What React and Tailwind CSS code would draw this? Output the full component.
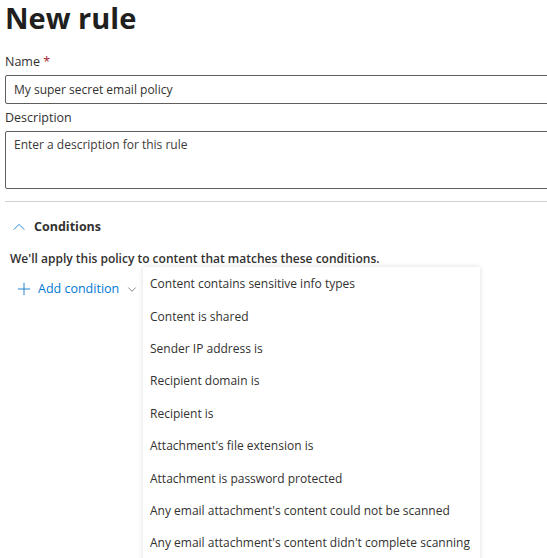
import React from 'react';

const conditionOptions = [
  'Content contains sensitive info types',
  'Content is shared',
  'Sender IP address is',
  'Recipient domain is',
  'Recipient is',
  "Attachment's file extension is",
  'Attachment is password protected',
  "Any email attachment's content could not be scanned",
  "Any email attachment's content didn't complete scanning",
];

function ChevronUp({ className }) {
  return (
    <svg viewBox="0 0 16 16" className={className} fill="none" stroke="currentColor" strokeWidth="1">
      <path d="M2 11 L8 5 L14 11" />
    </svg>
  );
}

function ChevronDown({ className }) {
  return (
    <svg viewBox="0 0 16 16" className={className} fill="none" stroke="currentColor" strokeWidth="1">
      <path d="M3 6 L8 11 L13 6" />
    </svg>
  );
}

function Plus({ className }) {
  return (
    <svg viewBox="0 0 16 16" className={className} fill="none" stroke="currentColor" strokeWidth="1">
      <path d="M8 1 V15 M1 8 H15" />
    </svg>
  );
}

export default function App() {
  return (
    <div
      className="relative w-[547px] h-[558px] overflow-hidden bg-white text-[#323130]"
      style={{ fontFamily: '"Open Sans", "Noto Sans", sans-serif' }}
    >
      <div className="pl-[5px] pt-[3px]">
        <h1 className="text-[29px] font-bold leading-[30px] text-[#201f1e]">New rule</h1>

        <label className="block mt-[19px] text-[12.5px] leading-[20px]">
          Name <span className="text-[#a4262c]">*</span>
        </label>
        <div className="mt-[3px] w-[560px] h-[29px] border border-[#605e5c] rounded-[2px] flex items-center px-[8px] pt-[1px] text-[12px]">
          My super secret email policy
        </div>

        <label className="block mt-[4px] text-[12.5px] leading-[20px]">Description</label>
        <div className="mt-[3px] w-[560px] h-[58px] border border-[#605e5c] rounded-[2px] px-[8px] pt-[4px] text-[12px] text-[#3b3a39]">
          Enter a description for this rule
        </div>

        <div className="mt-[12px] w-[560px] h-px bg-[#d2d0ce]" />

        <div className="mt-[15px] flex items-center pl-[7px] h-[20px]">
          <ChevronUp className="w-[14px] h-[14px] text-[#0078d4]" />
          <span className="ml-[8px] text-[12.5px] font-bold">Conditions</span>
        </div>

        <p className="mt-[12px] pl-[5px] text-[12px] font-semibold leading-[20px]">
          We'll apply this policy to content that matches these conditions.
        </p>

        <div className="mt-[10px] flex items-center pl-[12px] h-[20px] text-[#0078d4]">
          <Plus className="w-[14px] h-[14px]" />
          <span className="ml-[7px] text-[12.5px]">Add condition</span>
          <ChevronDown className="ml-[7px] w-[12px] h-[12px] text-[#605e5c]" />
        </div>
      </div>

      <div className="absolute left-[143px] top-[267px] w-[337px] bg-white shadow-[0_0_5px_rgba(0,0,0,0.14)] py-[1px]">
        {conditionOptions.map((opt) => (
          <div key={opt} className="h-[32.4px] flex items-center px-[7px] text-[12px] whitespace-nowrap">
            {opt}
          </div>
        ))}
      </div>
    </div>
  );
}
